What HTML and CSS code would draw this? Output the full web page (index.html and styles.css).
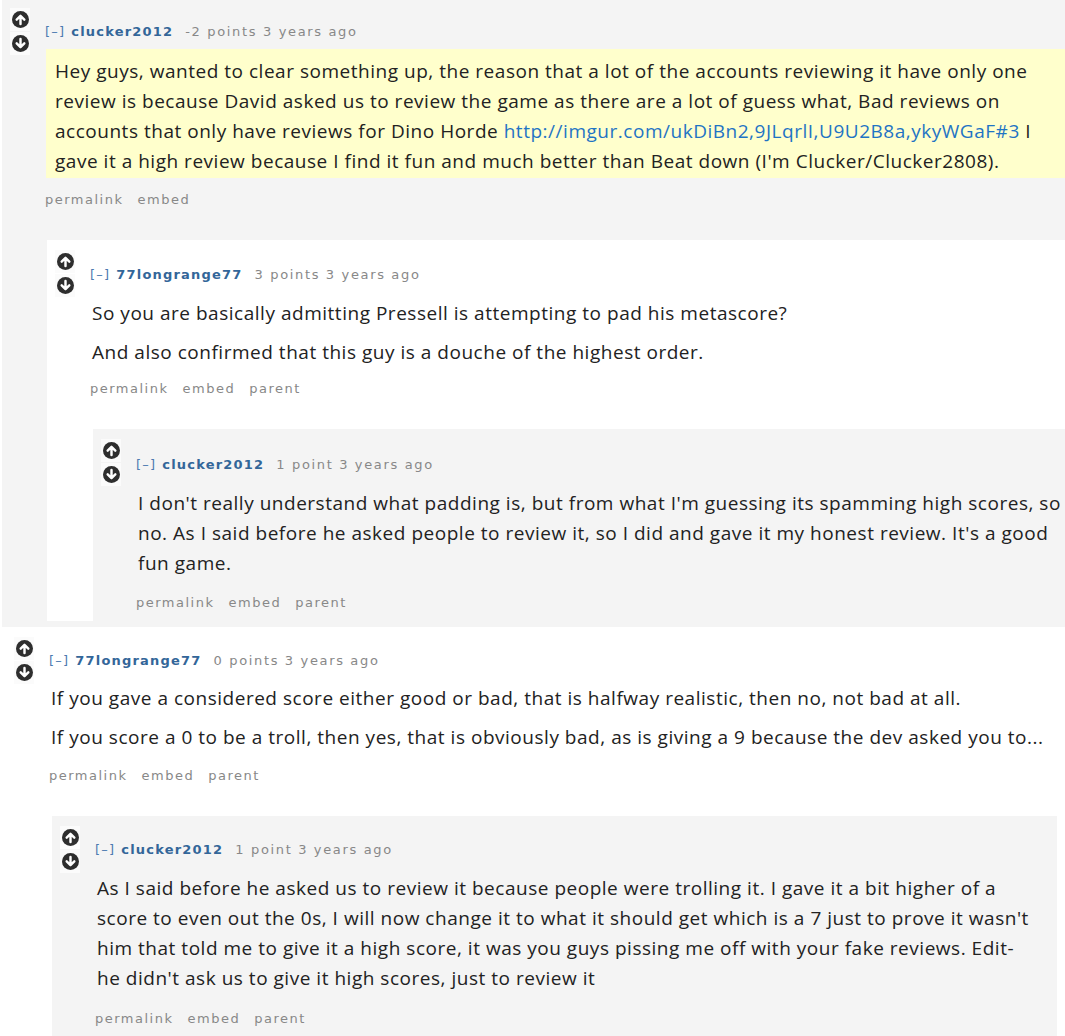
FILE: index.html
```html
<!DOCTYPE html>
<html lang="en">
<head>
<meta charset="utf-8">
<title>Comments</title>
<link rel="stylesheet" href="styles.css">
</head>
<body>
<div class="thread">

  <div class="comment grey first">
    <div class="votes">
      <span class="arrow"><svg viewBox="0 0 16 16" width="17" height="17"><circle cx="8" cy="8" r="8" fill="#2e2e2e"/><path d="M8 12.3V4.6M4.4 8.1L8 4.5l3.6 3.6" fill="none" stroke="#fff" stroke-width="2.3" stroke-linecap="round" stroke-linejoin="round"/></svg></span>
      <span class="arrow"><svg viewBox="0 0 16 16" width="17" height="17"><circle cx="8" cy="8" r="8" fill="#2e2e2e"/><path d="M8 3.7v7.7M4.4 7.9L8 11.5l3.6-3.6" fill="none" stroke="#fff" stroke-width="2.3" stroke-linecap="round" stroke-linejoin="round"/></svg></span>
    </div>
    <div class="entry">
      <p class="tagline"><span class="expand">[–]</span><a class="author">clucker2012</a><span class="score">-2 points 3 years ago</span></p>
      <div class="md new">
        <p>Hey guys, wanted to clear something up, the reason that a lot of the accounts reviewing it have only one review is because David asked us to review the game as there are a lot of guess what, Bad reviews on accounts that only have reviews for Dino Horde <a class="link">http://imgur.com/ukDiBn2,9JLqrlI,U9U2B8a,ykyWGaF#3</a> I gave it a high review because I find it fun and much better than Beat down (I'm Clucker/Clucker2808).</p>
      </div>
      <ul class="buttons"><li>permalink</li><li>embed</li></ul>

      <div class="child">
        <div class="comment white nested-a">
          <div class="votes">
            <span class="arrow"><svg viewBox="0 0 16 16" width="17" height="17"><circle cx="8" cy="8" r="8" fill="#2e2e2e"/><path d="M8 12.3V4.6M4.4 8.1L8 4.5l3.6 3.6" fill="none" stroke="#fff" stroke-width="2.3" stroke-linecap="round" stroke-linejoin="round"/></svg></span>
            <span class="arrow"><svg viewBox="0 0 16 16" width="17" height="17"><circle cx="8" cy="8" r="8" fill="#2e2e2e"/><path d="M8 3.7v7.7M4.4 7.9L8 11.5l3.6-3.6" fill="none" stroke="#fff" stroke-width="2.3" stroke-linecap="round" stroke-linejoin="round"/></svg></span>
          </div>
          <div class="entry">
            <p class="tagline"><span class="expand">[–]</span><a class="author">77longrange77</a><span class="score">3 points 3 years ago</span></p>
            <div class="md">
              <p>So you are basically admitting Pressell is attempting to pad his metascore?</p>
              <p>And also confirmed that this guy is a douche of the highest order.</p>
            </div>
            <ul class="buttons"><li>permalink</li><li>embed</li><li>parent</li></ul>

            <div class="child">
              <div class="comment grey nested-b last">
                <div class="votes">
                  <span class="arrow"><svg viewBox="0 0 16 16" width="17" height="17"><circle cx="8" cy="8" r="8" fill="#2e2e2e"/><path d="M8 12.3V4.6M4.4 8.1L8 4.5l3.6 3.6" fill="none" stroke="#fff" stroke-width="2.3" stroke-linecap="round" stroke-linejoin="round"/></svg></span>
                  <span class="arrow"><svg viewBox="0 0 16 16" width="17" height="17"><circle cx="8" cy="8" r="8" fill="#2e2e2e"/><path d="M8 3.7v7.7M4.4 7.9L8 11.5l3.6-3.6" fill="none" stroke="#fff" stroke-width="2.3" stroke-linecap="round" stroke-linejoin="round"/></svg></span>
                </div>
                <div class="entry">
                  <p class="tagline"><span class="expand">[–]</span><a class="author">clucker2012</a><span class="score">1 point 3 years ago</span></p>
                  <div class="md">
                    <p>I don't really understand what padding is, but from what I'm guessing its spamming high scores, so no. As I said before he asked people to review it, so I did and gave it my honest review. It's a good fun game.</p>
                  </div>
                  <ul class="buttons"><li>permalink</li><li>embed</li><li>parent</li></ul>
                </div>
              </div>
            </div>
          </div>
        </div>
      </div>
    </div>
  </div>

  <div class="comment white second">
    <div class="votes">
      <span class="arrow"><svg viewBox="0 0 16 16" width="17" height="17"><circle cx="8" cy="8" r="8" fill="#2e2e2e"/><path d="M8 12.3V4.6M4.4 8.1L8 4.5l3.6 3.6" fill="none" stroke="#fff" stroke-width="2.3" stroke-linecap="round" stroke-linejoin="round"/></svg></span>
      <span class="arrow"><svg viewBox="0 0 16 16" width="17" height="17"><circle cx="8" cy="8" r="8" fill="#2e2e2e"/><path d="M8 3.7v7.7M4.4 7.9L8 11.5l3.6-3.6" fill="none" stroke="#fff" stroke-width="2.3" stroke-linecap="round" stroke-linejoin="round"/></svg></span>
    </div>
    <div class="entry">
      <p class="tagline"><span class="expand">[–]</span><a class="author">77longrange77</a><span class="score">0 points 3 years ago</span></p>
      <div class="md">
        <p>If you gave a considered score either good or bad, that is halfway realistic, then no, not bad at all.</p>
        <p>If you score a 0 to be a troll, then yes, that is obviously bad, as is giving a 9 because the dev asked you to...</p>
      </div>
      <ul class="buttons"><li>permalink</li><li>embed</li><li>parent</li></ul>

      <div class="child">
        <div class="comment grey nested-c last">
          <div class="votes">
            <span class="arrow"><svg viewBox="0 0 16 16" width="17" height="17"><circle cx="8" cy="8" r="8" fill="#2e2e2e"/><path d="M8 12.3V4.6M4.4 8.1L8 4.5l3.6 3.6" fill="none" stroke="#fff" stroke-width="2.3" stroke-linecap="round" stroke-linejoin="round"/></svg></span>
            <span class="arrow"><svg viewBox="0 0 16 16" width="17" height="17"><circle cx="8" cy="8" r="8" fill="#2e2e2e"/><path d="M8 3.7v7.7M4.4 7.9L8 11.5l3.6-3.6" fill="none" stroke="#fff" stroke-width="2.3" stroke-linecap="round" stroke-linejoin="round"/></svg></span>
          </div>
          <div class="entry">
            <p class="tagline"><span class="expand">[–]</span><a class="author">clucker2012</a><span class="score">1 point 3 years ago</span></p>
            <div class="md">
              <p>As I said before he asked us to review it because people were trolling it. I gave it a bit higher of a score to even out the 0s, I will now change it to what it should get which is a 7 just to prove it wasn't him that told me to give it a high score, it was you guys pissing me off with your fake reviews. Edit- he didn't ask us to give it high scores, just to review it</p>
            </div>
            <ul class="buttons"><li>permalink</li><li>embed</li><li>parent</li></ul>
          </div>
        </div>
      </div>
    </div>
  </div>

</div>
</body>
</html>
```

FILE: styles.css
```css
html, body {
  margin: 0;
  padding: 0;
  background: #ffffff;
}

.thread {
  width: 1065px;
}

.comment {
  display: grid;
  grid-template-columns: 35px 1fr;
  padding: 10px 0 0 8px;
}

.grey { background: #f4f4f4; }
.white { background: #ffffff; }

.comment.first {
  margin-left: 2px;
  padding-top: 8px;
  padding-bottom: 6px;
}

.comment.last { padding-bottom: 7px; }
.comment.nested-b { padding-bottom: 8px; }

.comment.second {
  margin-left: 6px;
  margin-right: 8px;
}

.comment.nested-c { padding-right: 22px; }

.votes {
  display: flex;
  flex-direction: column;
  gap: 1px;
  align-items: flex-start;
}

.arrow {
  width: 20px;
  height: 23px;
  background: #fbfbfb;
  display: flex;
  align-items: center;
  justify-content: center;
}

.arrow svg { display: block; }

.entry {
  padding-top: 14px;
  min-width: 0;
}

.nested-a > .entry { padding-top: 15px; }
.nested-b > .entry { padding-top: 16px; }

.tagline {
  margin: 0;
  font-family: "DejaVu Sans", Verdana, sans-serif;
  font-size: 13px;
  line-height: 20px;
  letter-spacing: 1.2px;
  color: #888888;
  white-space: nowrap;
}

.expand {
  color: #4d7ab0;
  margin-right: 6px;
}

.author {
  color: #336699;
  font-weight: bold;
  margin-right: 12px;
}

.score { letter-spacing: 1.65px; }

.md {
  margin-top: 13px;
  padding-left: 2px;
  font-family: "Open Sans", "Noto Sans", sans-serif;
  font-size: 19px;
  letter-spacing: 0.52px;
  color: #222222;
}

.nested-b .md { margin-top: 13px; }
.second > .entry > .md { margin-top: 12px; }

.md p {
  margin: 0 0 9px;
  line-height: 30px;
}

.md p:last-child { margin-bottom: 0; }

.md.new {
  margin-top: 7px;
  margin-left: 1px;
  padding: 7px 10px 2px 9px;
  background: #ffffcc;
}

.link { color: #1f74c4; }

.buttons {
  list-style: none;
  margin: 14px 0 0;
  padding: 0;
  display: flex;
  gap: 14px;
  font-family: "DejaVu Sans", Verdana, sans-serif;
  font-size: 13px;
  line-height: 20px;
  letter-spacing: 1.5px;
  color: #888888;
}

.md.new + .buttons { margin-top: 12px; }
.nested-a > .entry > .buttons { margin-top: 12px; }
.nested-b .buttons { margin-top: 15px; }
.nested-c .buttons { margin-top: 16px; }

.child { margin-top: 30px; }

.nested-a { margin-left: 2px; }
.nested-b { margin-left: 3px; }
.nested-c { margin-left: 3px; }
```
